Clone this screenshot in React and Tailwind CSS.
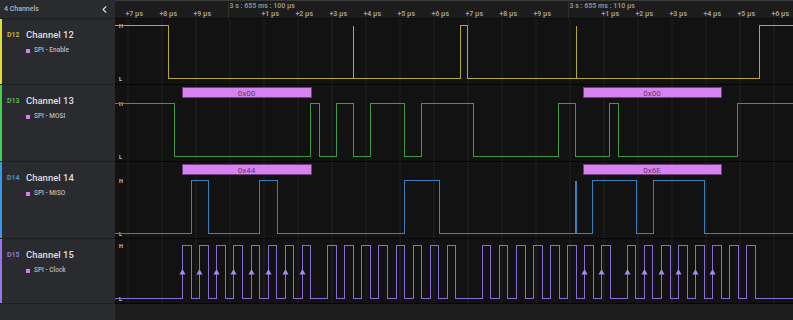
import React from 'react';
import { ChevronLeft } from 'lucide-react';

const X0 = 115;
const W = 678;
const FONT = 'Roboto, "Liberation Sans", sans-serif';

const grid = Array.from({ length: 20 }, (_, n) => Math.round(126.7 + 34 * n));

const rulerLabels = [
  ['+7 µs', 125.5], ['+8 µs', 159.5], ['+9 µs', 193.5], ['+1 µs', 261.5], ['+2 µs', 295.5],
  ['+3 µs', 329.5], ['+4 µs', 363.5], ['+5 µs', 397.5], ['+6 µs', 431.5], ['+7 µs', 465.5],
  ['+8 µs', 499.5], ['+9 µs', 533.5], ['+1 µs', 601.5], ['+2 µs', 635.5], ['+3 µs', 669.5],
  ['+4 µs', 703.5], ['+5 µs', 737.5], ['+6 µs', 771.5],
];

// builds a square wave path from a list of edge positions
const buildPath = (startHigh, edges, hy, ly) => {
  let y = startHigh ? hy : ly;
  let d = `M${X0} ${y}`;
  edges.forEach((x) => {
    d += ` H${x}`;
    y = y === hy ? ly : hy;
    d += ` V${y}`;
  });
  return d + ` H793`;
};

const clockEdges = [];
const clockRises = [];
[182.3, 327.3, 481.7, 626.7].forEach((s) => {
  for (let i = 0; i < 8; i++) {
    const r = Math.round(s + i * 17.05) + 0.5;
    clockRises.push(r);
    clockEdges.push(r, Math.round(s + i * 17.05 + 8.7) + 0.5);
  }
});
const arrowIdx = [0, 1, 2, 3, 4, 5, 6, 7, 22, 23, 24, 25, 26, 27, 28, 29];

const channels = [
  {
    id: 'D12', name: 'Channel 12', sub: 'SPI - Enable', h: 65, bar: 'bg-[#e3dc31]', idColor: 'text-[#bdb13a]',
    stroke: '#b7a92c', hy: 6.5, ly: 59.5,
    path: buildPath(true, [168.5, 460.5, 467.5, 759.5], 6.5, 59.5),
    spikes: [[353.5, 1], [576.5, 1]],
  },
  {
    id: 'D13', name: 'Channel 13', sub: 'SPI - MOSI', h: 76, bar: 'bg-[#46cf4c]', idColor: 'text-[#4fb653]',
    stroke: '#3f9a45', hy: 18.5, ly: 71.5,
    path: buildPath(true, [174.5, 310.5, 319.5, 336.5, 353.5, 370.5, 404.5, 421.5, 473.5, 558.5, 575.5, 609.5, 618.5, 737.5], 18.5, 71.5),
    boxes: [[182, 311, '0x00'], [583, 721, '0x00']],
  },
  {
    id: 'D14', name: 'Channel 14', sub: 'SPI - MISO', h: 76, bar: 'bg-[#3c97ea]', idColor: 'text-[#4a8fd0]',
    stroke: '#3b7fbf', hy: 18.5, ly: 71.5,
    path: buildPath(false, [191.5, 208.5, 259.5, 277.5, 404.5, 439.5, 592.5, 636.5, 653.5, 704.5], 18.5, 71.5),
    spikes: [[576, 2]],
    boxes: [[182, 311, '0x44'], [583, 721, '0x6E']],
  },
  {
    id: 'D15', name: 'Channel 15', sub: 'SPI - Clock', h: 64, bar: 'bg-[#9c72ee]', idColor: 'text-[#8d74d6]',
    stroke: '#8a6dd4', hy: 6.5, ly: 59.5,
    path: buildPath(false, clockEdges, 6.5, 59.5),
    arrows: arrowIdx.map((i) => clockRises[i]),
  },
];

const Lane = ({ ch }) => (
  <svg width={W} height={ch.h} viewBox={`${X0} 0 ${W} ${ch.h}`} className="block" shapeRendering="crispEdges">
    <rect x={X0} y="0" width={W} height={ch.h} fill="#121212" />
    {grid.map((x) => (
      <rect key={x} x={x} y="0" width="2" height={ch.h} fill="#1a1a1a" />
    ))}
    <text x="119" y={ch.hy + 2} fontSize="5.5" fontWeight="700" fill="#c8c8c8" fontFamily={FONT}>H</text>
    <text x="119" y={ch.ly + 2} fontSize="5.5" fontWeight="700" fill="#c8c8c8" fontFamily={FONT}>L</text>
    {(ch.boxes || []).map(([a, b, t]) => (
      <g key={a}>
        <rect x={a + 0.5} y="2.5" width={b - a} height="10" fill="#d882f2" stroke="#6e3e80" />
        <text x={(a + b) / 2} y="10.5" fontSize="8" textAnchor="middle" fill="#5c3a68" fontFamily={FONT} shapeRendering="auto">{t}</text>
      </g>
    ))}
    <path d={ch.path} fill="none" stroke={ch.stroke} strokeWidth="1" />
    {(ch.spikes || []).map(([x, w]) => (
      <path key={x} d={`M${x} ${ch.ly} V${ch.hy}`} stroke={ch.stroke} strokeWidth={w} />
    ))}
    {(ch.arrows || []).map((x) => (
      <path key={x} d={`M${x} 30 L${x + 3} 35.5 L${x - 3} 35.5 Z`} fill="#a58cf2" shapeRendering="auto" />
    ))}
  </svg>
);

const App = () => (
  <div className="w-[793px] h-[320px] overflow-hidden flex flex-col bg-[#1c1c1c]" style={{ fontFamily: FONT }}>
    <div className="flex h-[19px] shrink-0">
      <div className="w-[115px] shrink-0 flex items-center justify-between pl-[4px] pr-[5px] bg-[#2a2b2f] border-b border-[#1d1e21]">
        <span className="text-[7px] text-[#b4b4b8] font-medium">4 Channels</span>
        <ChevronLeft size={11} strokeWidth={2.5} className="text-[#dcdcdc]" />
      </div>
      <div className="flex-1 bg-[#1c1c1c] border-t border-[#3a3a3a] border-b border-b-[#0c0c0c]">
        <svg width={W} height="17" viewBox={`${X0} 0 ${W} 17`} className="block">
          {[228, 568].map((x) => (
            <rect key={x} x={x} y="0" width="1" height="17" fill="#2c2c2c" />
          ))}
          <text x="229.5" y="7" fontSize="7" fontWeight="700" fill="#8e8e8e" fontFamily={FONT}>3 s : 655 ms : 100 µs</text>
          <text x="569.5" y="7" fontSize="7" fontWeight="700" fill="#8e8e8e" fontFamily={FONT}>3 s : 655 ms : 110 µs</text>
          {rulerLabels.map(([t, x], i) => (
            <text key={i} x={x} y="15" fontSize="7" fontWeight="700" fill="#9a9a9a" fontFamily={FONT}>{t}</text>
          ))}
        </svg>
      </div>
    </div>
    {channels.map((ch) => (
      <div key={ch.id} className="flex shrink-0">
        <div className="w-[115px] shrink-0 flex bg-[#2a2b2f] border-b border-[#1e1f22]">
          <div className={`w-[2px] ${ch.bar}`} />
          <div className="flex-1 flex flex-col pl-[5px] pt-[11px]">
            <div className="flex items-center h-[10px]">
              <span className={`w-[19px] text-[7px] font-bold ${ch.idColor}`}>{ch.id}</span>
              <span className="text-[9.5px] font-medium text-[#dedee2]">{ch.name}</span>
            </div>
            <div className="flex items-center h-[10px] mt-[6px] pl-[19px] gap-[4px]">
              <span className="w-[4px] h-[4px] bg-[#d77ef2]" />
              <span className="text-[6.5px] font-medium text-[#b8b8bc]">{ch.sub}</span>
            </div>
          </div>
        </div>
        <div className="flex-1 border-b border-[#050505]">
          <Lane ch={ch} />
        </div>
      </div>
    ))}
    <div className="flex flex-1">
      <div className="w-[115px] bg-[#2a2b2f]" />
      <div className="flex-1 bg-[#1d1d1d]" />
    </div>
  </div>
);

export default App;
